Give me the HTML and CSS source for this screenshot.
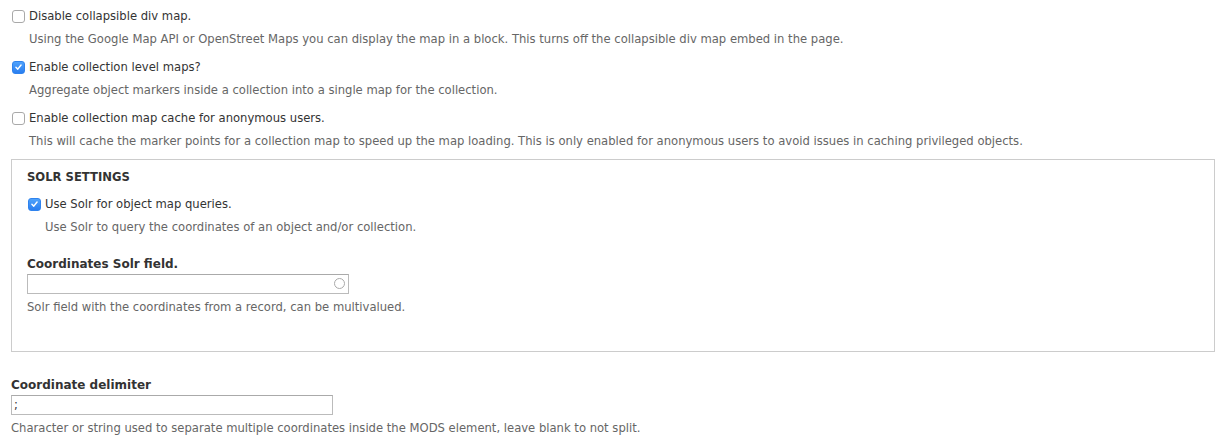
FILE: index.html
```html
<!DOCTYPE html>
<html>
<head>
<meta charset="utf-8">
<link rel="stylesheet" href="styles.css">
</head>
<body>
<div class="form">
  <div class="item">
    <div class="check-row"><span class="cb"></span><span class="cb-label">Disable collapsible div map.</span></div>
    <div class="desc">Using the Google Map API or OpenStreet Maps you can display the map in a block. This turns off the collapsible div map embed in the page.</div>
  </div>
  <div class="item">
    <div class="check-row"><span class="cb checked"><svg viewBox="0 0 12 12" width="12" height="12"><path d="M3.2 6.3 L5.2 8.3 L8.8 3.8" fill="none" stroke="#fff" stroke-width="1.6" stroke-linecap="round" stroke-linejoin="round"/></svg></span><span class="cb-label">Enable collection level maps?</span></div>
    <div class="desc">Aggregate object markers inside a collection into a single map for the collection.</div>
  </div>
  <div class="item last">
    <div class="check-row"><span class="cb"></span><span class="cb-label">Enable collection map cache for anonymous users.</span></div>
    <div class="desc">This will cache the marker points for a collection map to speed up the map loading. This is only enabled for anonymous users to avoid issues in caching privileged objects.</div>
  </div>

  <div class="fieldset">
    <div class="legend">SOLR SETTINGS</div>
    <div class="item inner">
      <div class="check-row"><span class="cb checked"><svg viewBox="0 0 12 12" width="12" height="12"><path d="M3.2 6.3 L5.2 8.3 L8.8 3.8" fill="none" stroke="#fff" stroke-width="1.6" stroke-linecap="round" stroke-linejoin="round"/></svg></span><span class="cb-label">Use Solr for object map queries.</span></div>
      <div class="desc">Use Solr to query the coordinates of an object and/or collection.</div>
    </div>
    <div class="field first">
      <div class="field-label">Coordinates Solr field.</div>
      <div class="input autocomplete"><span class="throbber"></span></div>
      <div class="field-desc">Solr field with the coordinates from a record, can be multivalued.</div>
    </div>
  </div>

  <div class="field outer">
    <div class="field-label">Coordinate delimiter</div>
    <div class="input"><span class="value">;</span></div>
    <div class="field-desc">Character or string used to separate multiple coordinates inside the MODS element, leave blank to not split.</div>
  </div>
</div>
</body>
</html>
```
FILE: styles.css
```css
html, body {
  margin: 0;
  padding: 0;
  background: #fff;
}
body {
  font-family: "DejaVu Sans", "Liberation Sans", sans-serif;
  font-size: 11.6px;
  color: #333;
}
.form {
  padding: 7px 14px 0 11px;
}
.item {
  margin-bottom: 10px;
}
.item.last {
  margin-bottom: 0;
}
.check-row {
  display: flex;
  align-items: center;
  height: 18px;
  padding-left: 1px;
}
.cb {
  width: 11px;
  height: 11px;
  border: 1px solid #a9a9a9;
  border-radius: 3px;
  background: #fff;
  margin-right: 4px;
  display: flex;
  align-items: center;
  justify-content: center;
  flex-shrink: 0;
}
.cb.checked {
  border-color: #2f83ee;
  background: linear-gradient(#4fa2fb, #2a7ef0);
}
.cb svg {
  display: block;
}
.cb-label {
  line-height: 18px;
  color: #333;
}
.desc {
  margin-top: 5px;
  line-height: 18px;
  padding-left: 18px;
  color: #666;
}
.fieldset {
  border: 1px solid #ccc;
  margin-top: 9px;
  padding: 8px 15px 35px 15px;
}
.legend {
  font-weight: bold;
  line-height: 18px;
  color: #333;
}
.item.inner {
  margin-top: 9px;
  margin-bottom: 0;
}
.field.first {
  margin-top: 19px;
}
.field.outer {
  margin-top: 24px;
}
.field-label {
  font-weight: bold;
  font-size: 12px;
  line-height: 18px;
  color: #333;
}
.input {
  margin-top: 1px;
  width: 320px;
  height: 18px;
  border: 1px solid #bbb;
  border-top-color: #aaa;
  display: flex;
  align-items: center;
  position: relative;
  box-sizing: content-box;
}
.value {
  padding-left: 2px;
  color: #333;
}
.throbber {
  position: absolute;
  right: 3px;
  top: 3px;
  width: 9px;
  height: 9px;
  border: 1.5px solid #aaa;
  border-radius: 50%;
}
.field-desc {
  margin-top: 4px;
  line-height: 18px;
  color: #666;
}
```
